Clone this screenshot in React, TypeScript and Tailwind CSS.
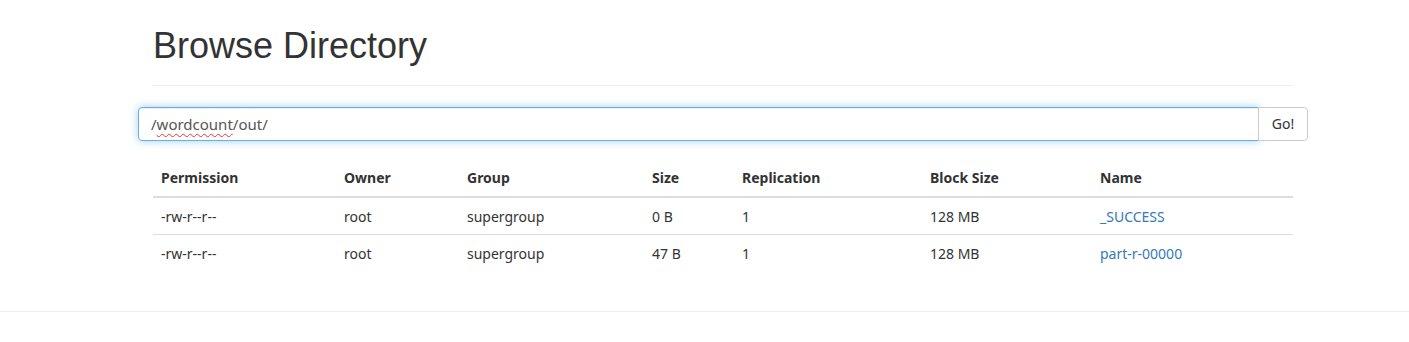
const files = [
  { perm: "-rw-r--r--", owner: "root", group: "supergroup", size: "0 B", repl: "1", block: "128 MB", name: "_SUCCESS" },
  { perm: "-rw-r--r--", owner: "root", group: "supergroup", size: "47 B", repl: "1", block: "128 MB", name: "part-r-00000" },
];

export default function App() {
  return (
    <div className="min-h-[342px] bg-white text-[#333] text-[14px] leading-[20px] font-['Noto_Sans',sans-serif]">
      <div className="ml-[153px] w-[1140px]">
        <div className="pt-[26px] pb-[9px] mb-[21px] border-b border-[#eee]">
          <h1 className="m-0 mb-[10px] text-[36px] leading-[1.1] font-normal font-['Liberation_Sans',Arial,sans-serif] text-[#333]">
            Browse Directory
          </h1>
        </div>

        <div className="-ml-[15px] w-[1170px] flex">
          <div className="flex-1 h-[34px] flex items-center px-[12px] border border-[#66afe9] rounded-l-[4px] text-[15px] text-[#555] shadow-[inset_0_1px_1px_rgba(0,0,0,.075),0_0_8px_rgba(102,175,233,.6)]">
            <span>/</span>
            <span className="underline decoration-wavy decoration-[#e33] decoration-1 underline-offset-[3px]">wordcount</span>
            <span>/out/</span>
          </div>
          <button className="h-[34px] w-[50px] -ml-px border border-[#ccc] rounded-r-[4px] bg-white text-[#333] text-[14px]">
            Go!
          </button>
        </div>

        <table className="mt-[19px] w-full table-fixed border-collapse">
          <thead>
            <tr className="text-left">
              <th className="w-[183px] p-[8px] font-bold border-b-2 border-[#ddd]">Permission</th>
              <th className="w-[123px] p-[8px] font-bold border-b-2 border-[#ddd]">Owner</th>
              <th className="w-[185px] p-[8px] font-bold border-b-2 border-[#ddd]">Group</th>
              <th className="w-[90px] p-[8px] font-bold border-b-2 border-[#ddd]">Size</th>
              <th className="w-[188px] p-[8px] font-bold border-b-2 border-[#ddd]">Replication</th>
              <th className="w-[170px] p-[8px] font-bold border-b-2 border-[#ddd]">Block Size</th>
              <th className="p-[8px] font-bold border-b-2 border-[#ddd]">Name</th>
            </tr>
          </thead>
          <tbody>
            {files.map((f, i) => (
              <tr key={f.name} className={i > 0 ? "border-t border-[#ddd]" : ""}>
                <td className="p-[8px] pt-[9px] pb-[7px]">{f.perm}</td>
                <td className="p-[8px] pt-[9px] pb-[7px]">{f.owner}</td>
                <td className="p-[8px] pt-[9px] pb-[7px]">{f.group}</td>
                <td className="p-[8px] pt-[9px] pb-[7px]">{f.size}</td>
                <td className="p-[8px] pt-[9px] pb-[7px]">{f.repl}</td>
                <td className="p-[8px] pt-[9px] pb-[7px]">{f.block}</td>
                <td className="p-[8px] pt-[9px] pb-[7px]">
                  <a href="#" className="text-[#337ab7]">{f.name}</a>
                </td>
              </tr>
            ))}
          </tbody>
        </table>
      </div>

      <div className="mt-[40px] border-t border-[#eee]" />
    </div>
  );
}
